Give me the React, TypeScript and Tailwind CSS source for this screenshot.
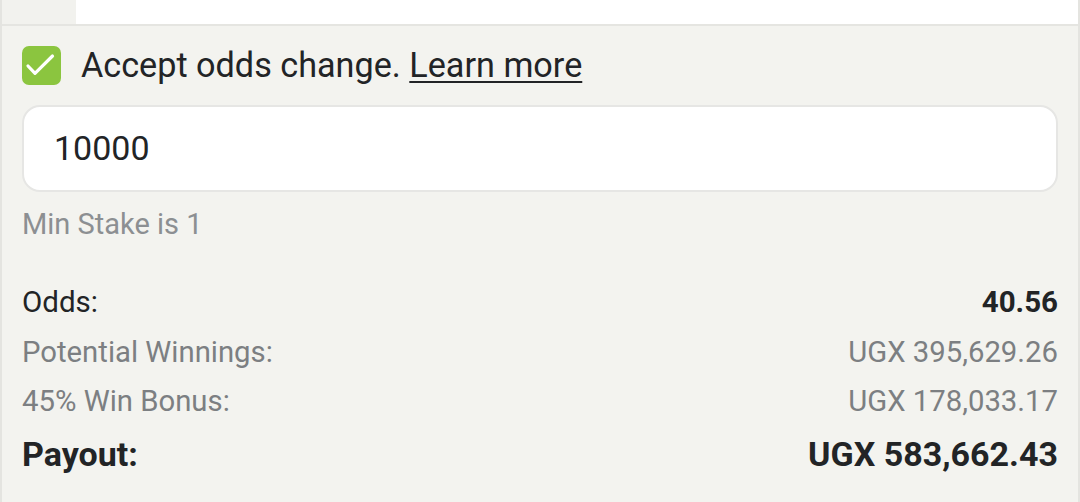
import React from "react";

export default function App() {
  return (
    <div
      className="w-[1080px] h-[502px] overflow-hidden bg-[#f3f3ef] border-l-2 border-r-2 border-[#e4e4e0] text-[#222426]"
      style={{ fontFamily: "Roboto, 'Noto Sans', sans-serif" }}
    >
      <div className="flex h-[24px]">
        <div className="w-[74px] bg-[#f2f2ee]" />
        <div className="flex-1 bg-white" />
      </div>
      <div className="h-[2px] bg-[#e5e5e1]" />
      <div className="px-[20px]">
        <div className="mt-[20px] flex items-center h-[39px]">
          <div className="w-[39px] h-[39px] rounded-[7px] bg-[#8bc53f] flex items-center justify-center shrink-0">
            <svg width="39" height="39" viewBox="0 0 39 39" fill="none">
              <polyline
                points="6,20 13,27.3 30.5,10"
                stroke="white"
                strokeWidth="3.2"
                strokeLinecap="round"
                strokeLinejoin="round"
              />
            </svg>
          </div>
          <div className="ml-[20px] text-[34.2px] leading-[39px] whitespace-nowrap">
            Accept odds change. <span className="underline underline-offset-[4px] decoration-2">Learn more</span>
          </div>
        </div>
        <div className="mt-[20px] h-[87px] rounded-[18px] border-2 border-[#e6e6e4] bg-white flex items-center pl-[30px] text-[34px]">
          10000
        </div>
        <div className="mt-[16px] text-[29px] leading-[32px] text-[#8c8f92]">Min Stake is 1</div>
        <div className="mt-[37px] flex flex-col">
          <div className="h-[50px] flex items-center justify-between text-[29.5px]">
            <span>Odds:</span>
            <span className="font-bold">40.56</span>
          </div>
          <div className="h-[51px] flex items-center justify-between text-[29.3px] text-[#7c7f82]">
            <span>Potential Winnings:</span>
            <span>UGX 395,629.26</span>
          </div>
          <div className="h-[48px] flex items-center justify-between text-[29.3px] text-[#7c7f82]">
            <span>45% Win Bonus:</span>
            <span>UGX 178,033.17</span>
          </div>
          <div className="h-[56px] flex items-center justify-between text-[34px] font-bold">
            <span>Payout:</span>
            <span>UGX 583,662.43</span>
          </div>
        </div>
      </div>
    </div>
  );
}
